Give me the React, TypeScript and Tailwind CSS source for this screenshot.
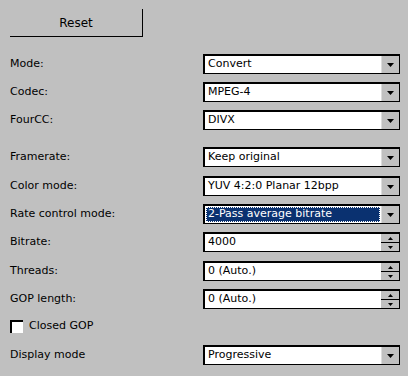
const font = "font-['Tahoma','DejaVu_Sans','Liberation_Sans',sans-serif] text-[11px]"

function Arrow() {
  return (
    <div className="flex h-full w-[18px] items-center justify-center border-l border-[#dcdcdc] bg-[#c0c0c0]">
      <svg width="7" height="4" viewBox="0 0 7 4">
        <path d="M0 0h7L3.5 4z" fill="#000" />
      </svg>
    </div>
  )
}

function Spin() {
  return (
    <div className="flex h-full w-[18px] flex-col bg-[#c0c0c0]">
      <div className="flex flex-1 items-center justify-center border-b border-[#000]">
        <svg width="5" height="3" viewBox="0 0 5 3">
          <path d="M2.5 0L5 3H0z" fill="#000" />
        </svg>
      </div>
      <div className="flex flex-1 items-center justify-center">
        <svg width="5" height="3" viewBox="0 0 5 3">
          <path d="M0 0h5L2.5 3z" fill="#000" />
        </svg>
      </div>
    </div>
  )
}

function Field({ value, spin, selected }: { value: string; spin?: boolean; selected?: boolean }) {
  return (
    <div className="flex h-[20px] w-[197px] items-stretch border border-[#000] border-t-2 border-l-2 bg-white">
      <div className="flex flex-1 items-center p-[1px]">
        {selected ? (
          <div className="flex h-full w-full items-center border border-dotted border-white bg-[#0a3170] pl-[1px] text-white">
            {value}
          </div>
        ) : (
          <div className="pl-[2px] text-black">{value}</div>
        )}
      </div>
      {spin ? <Spin /> : <Arrow />}
    </div>
  )
}

function Row({ label, value, mt, spin, selected }: { label: string; value: string; mt: string; spin?: boolean; selected?: boolean }) {
  return (
    <div className={`flex h-[20px] items-center ${mt}`}>
      <div className="w-[193px] text-black">{label}</div>
      <Field value={value} spin={spin} selected={selected} />
    </div>
  )
}

export default function App() {
  return (
    <div className={`h-[376px] w-[408px] bg-[#c0c0c0] pl-[10px] pt-[9px] ${font}`}>
      <div className="flex h-[28px] w-[133px] items-center justify-center border-r border-b border-[#000] text-[12px] text-black">
        Reset
      </div>
      <Row label="Mode:" value="Convert" mt="mt-[17px]" />
      <Row label="Codec:" value="MPEG-4" mt="mt-[8px]" />
      <Row label="FourCC:" value="DIVX" mt="mt-[8px]" />
      <Row label="Framerate:" value="Keep original" mt="mt-[17px]" />
      <Row label="Color mode:" value="YUV 4:2:0 Planar 12bpp" mt="mt-[9px]" />
      <Row label="Rate control mode:" value="2-Pass average bitrate" mt="mt-[8px]" selected />
      <Row label="Bitrate:" value="4000" mt="mt-[8px]" spin />
      <Row label="Threads:" value="0 (Auto.)" mt="mt-[9px]" spin />
      <Row label="GOP length:" value="0 (Auto.)" mt="mt-[8px]" spin />
      <div className="mt-[9px] flex h-[16px] items-center gap-[6px]">
        <div className="h-[13px] w-[13px] border-t-2 border-l-2 border-[#000] bg-white" />
        <span className="text-black">Closed GOP</span>
      </div>
      <Row label="Display mode" value="Progressive" mt="mt-[11px]" />
    </div>
  )
}
